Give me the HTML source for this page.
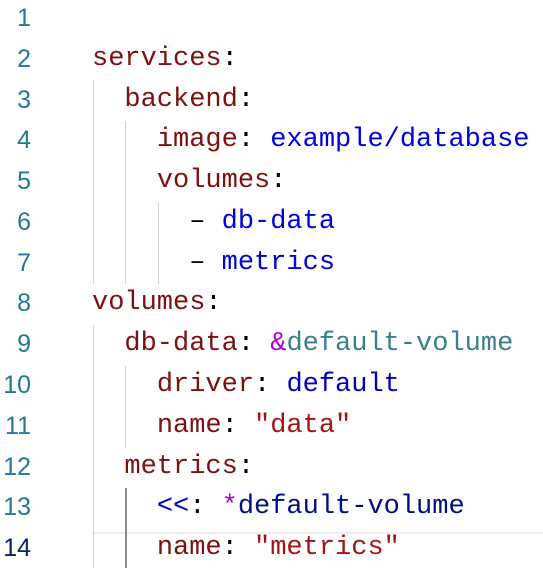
<!DOCTYPE html>
<html><head><meta charset="utf-8"><style>
html,body{margin:0;padding:0;background:#fff;width:543px;height:568px;overflow:hidden}
.ed{position:relative;width:543px;height:568px;font-family:"Liberation Mono","DejaVu Sans Mono",monospace;font-size:27px}
.ln{position:absolute;left:0;width:31px;text-align:right;color:#237893;line-height:40.77px;height:40.77px;font-family:"Liberation Sans",sans-serif;font-size:25px}
.cd{position:absolute;left:92px;white-space:pre;line-height:40.77px;height:40.77px;color:#000}
.k{color:#7d1010}.v{color:#0000e0}.s{color:#a31515}
.an{color:#3a7f8e}.p{color:#af00db}.nv{color:#001080}.mb{color:#0000c0}
.g{position:absolute;width:1px;background:#d3d3d3}
.cur{position:absolute;left:92px;right:0;top:532px;height:40px;border-top:2px solid #eeeeee;border-bottom:2px solid #eeeeee}
</style></head><body><div class="ed">
<div class="cur"></div>
<div class="g" style="left:93px;top:80px;height:204px"></div>
<div class="g" style="left:125px;top:121px;height:163px"></div>
<div class="g" style="left:158px;top:202px;height:82px"></div>
<div class="g" style="left:93px;top:325px;height:243px"></div>
<div class="g" style="left:125px;top:366px;height:82px"></div>
<div class="g" style="left:125px;top:488px;height:80px;background:#8a8a8a;width:2px"></div>
<div class="ln" style="top:-2px">1</div>
<div class="ln" style="top:38.8px">2</div>
<div class="ln" style="top:79.5px">3</div>
<div class="ln" style="top:120.3px">4</div>
<div class="ln" style="top:161.1px">5</div>
<div class="ln" style="top:201.9px">6</div>
<div class="ln" style="top:242.6px">7</div>
<div class="ln" style="top:283.4px">8</div>
<div class="ln" style="top:324.2px">9</div>
<div class="ln" style="top:364.9px">10</div>
<div class="ln" style="top:405.7px">11</div>
<div class="ln" style="top:446.5px">12</div>
<div class="ln" style="top:487.3px">13</div>
<div class="ln" style="top:528px;color:#0b216f">14</div>
<div class="cd" style="top:38.8px"><span class="k">services</span>:</div>
<div class="cd" style="top:79.5px">  <span class="k">backend</span>:</div>
<div class="cd" style="top:120.3px">    <span class="k">image</span>: <span class="v">example/database</span></div>
<div class="cd" style="top:161.1px">    <span class="k">volumes</span>:</div>
<div class="cd" style="top:201.9px">      – <span class="v">db-data</span></div>
<div class="cd" style="top:242.6px">      – <span class="v">metrics</span></div>
<div class="cd" style="top:283.4px"><span class="k">volumes</span>:</div>
<div class="cd" style="top:324.2px">  <span class="k">db-data</span>: <span class="p">&amp;</span><span class="an">default-volume</span></div>
<div class="cd" style="top:364.9px">    <span class="k">driver</span>: <span class="mb">default</span></div>
<div class="cd" style="top:405.7px">    <span class="k">name</span>: <span class="s">"data"</span></div>
<div class="cd" style="top:446.5px">  <span class="k">metrics</span>:</div>
<div class="cd" style="top:487.3px">    <span class="mb">&lt;&lt;</span>: <span class="p">*</span><span class="nv">default-volume</span></div>
<div class="cd" style="top:528px">    <span class="k">name</span>: <span class="s">"metrics"</span></div>
</div></body></html>
